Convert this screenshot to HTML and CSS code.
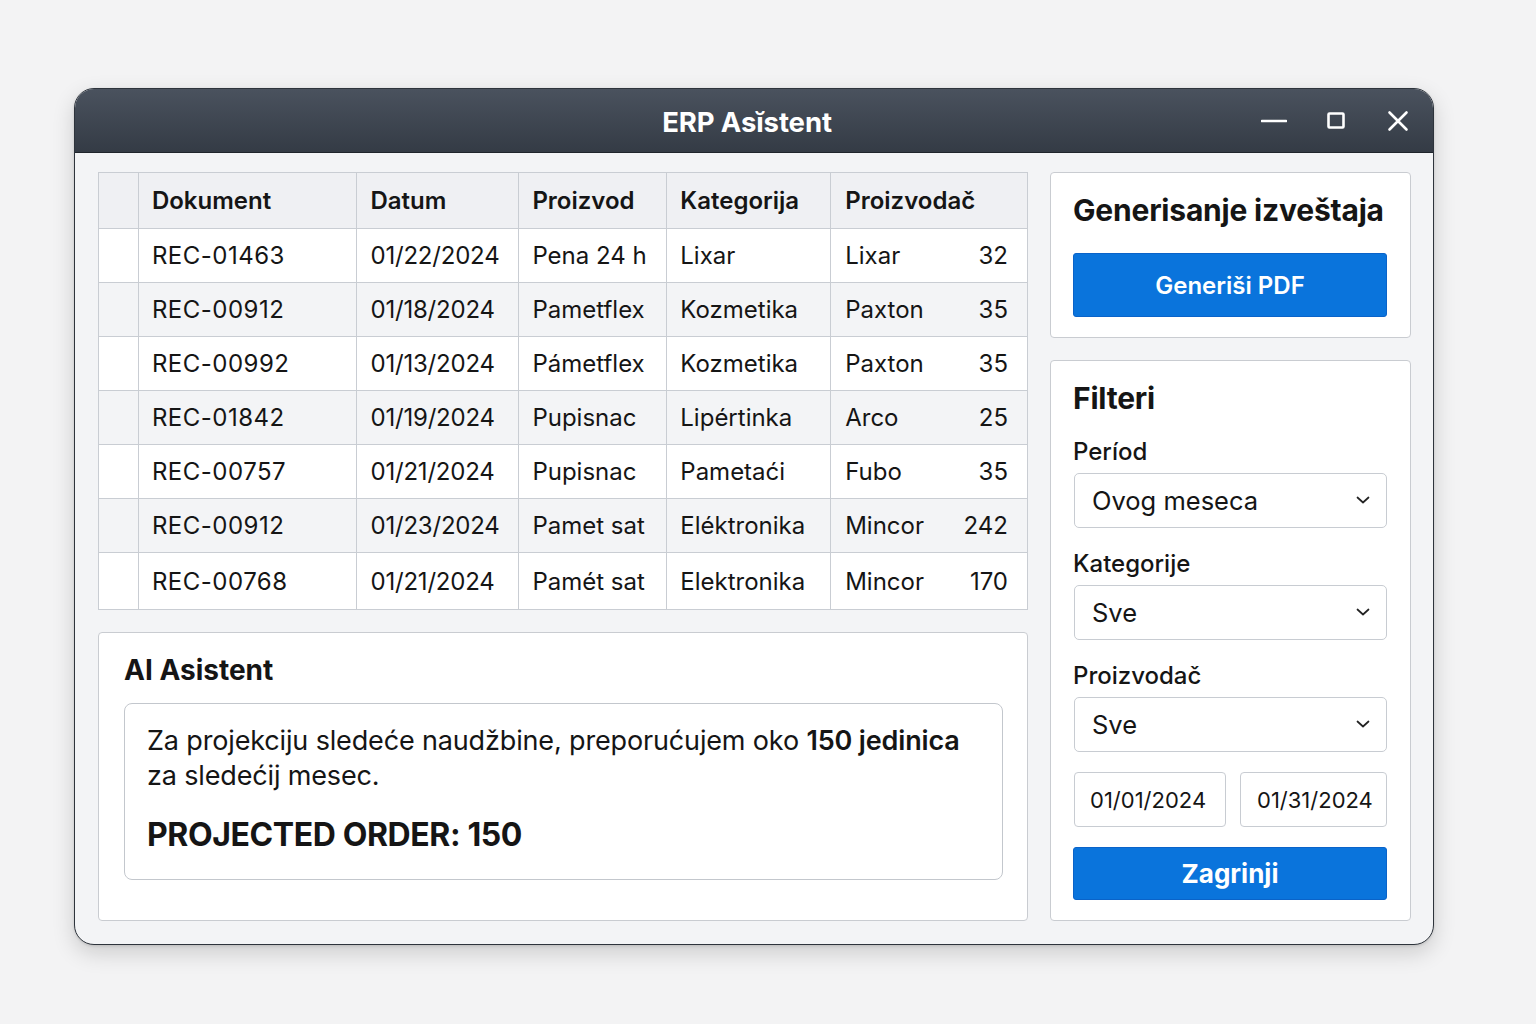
FILE: index.html
```html
<!DOCTYPE html>
<html lang="sr">
<head>
<meta charset="utf-8">
<title>ERP Asistent</title>
<link rel="stylesheet" href="styles.css">
</head>
<body>
<div class="page">
  <div class="window">
    <div class="titlebar">
      <div class="title">ERP Asĭstent</div>
      <div class="controls">
        <svg class="ctl" width="26" height="26" viewBox="0 0 26 26"><line x1="1" y1="13" x2="25" y2="13" stroke="#fff" stroke-width="2.6" stroke-linecap="round"/></svg>
        <svg class="ctl" width="26" height="26" viewBox="0 0 26 26"><rect x="5.5" y="5.5" width="15" height="14" rx="1" fill="none" stroke="#fff" stroke-width="2.6"/></svg>
        <svg class="ctl" width="26" height="26" viewBox="0 0 26 26"><path d="M4.5 4.5 L21.5 21.5 M21.5 4.5 L4.5 21.5" stroke="#fff" stroke-width="2.6" stroke-linecap="round"/></svg>
      </div>
    </div>
    <div class="body">
      <div class="main-col">
        <table class="grid">
          <colgroup>
            <col class="c0"><col class="c1"><col class="c2"><col class="c3"><col class="c4"><col class="c5">
          </colgroup>
          <thead>
            <tr><th></th><th>Dokument</th><th>Datum</th><th>Proizvod</th><th>Kategorija</th><th>Proizvodač</th></tr>
          </thead>
          <tbody>
            <tr><td></td><td>REC-01463</td><td>01/22/2024</td><td>Pena 24 h</td><td>Lixar</td><td><div class="split"><span>Lixar</span><span>32</span></div></td></tr>
            <tr><td></td><td>REC-00912</td><td>01/18/2024</td><td>Pametflex</td><td>Kozmetika</td><td><div class="split"><span>Paxton</span><span>35</span></div></td></tr>
            <tr><td></td><td>REC-00992</td><td>01/13/2024</td><td>Pámetflex</td><td>Kozmetika</td><td><div class="split"><span>Paxton</span><span>35</span></div></td></tr>
            <tr><td></td><td>REC-01842</td><td>01/19/2024</td><td>Pupisnac</td><td>Lipértinka</td><td><div class="split"><span>Arco</span><span>25</span></div></td></tr>
            <tr><td></td><td>REC-00757</td><td>01/21/2024</td><td>Pupisnac</td><td>Pametaći</td><td><div class="split"><span>Fubo</span><span>35</span></div></td></tr>
            <tr><td></td><td>REC-00912</td><td>01/23/2024</td><td>Pamet sat</td><td>Eléktronika</td><td><div class="split"><span>Mincor</span><span>242</span></div></td></tr>
            <tr><td></td><td>REC-00768</td><td>01/21/2024</td><td>Pamét sat</td><td>Elektronika</td><td><div class="split"><span>Mincor</span><span>170</span></div></td></tr>
          </tbody>
        </table>
        <section class="card ai-card">
          <h2 class="ai-title">AI Asistent</h2>
          <div class="ai-box">
            <p class="ai-text">Za projekciju sledeće naudžbine, preporućujem oko <strong>150 jedinica</strong> za sledećij mesec.</p>
            <p class="ai-order">PROJECTED ORDER: 150</p>
          </div>
        </section>
      </div>
      <div class="side-col">
        <section class="card report-card">
          <h2 class="card-title">Generisanje izveštaja</h2>
          <button class="btn btn-pdf">Generiši PDF</button>
        </section>
        <section class="card filter-card">
          <h2 class="card-title">Filteri</h2>
          <div class="label">Períod</div>
          <div class="select"><span>Ovog meseca</span><svg width="14" height="10" viewBox="0 0 14 10"><path d="M1.5 2.5 L7 7.5 L12.5 2.5" fill="none" stroke="#222" stroke-width="1.7" stroke-linecap="round" stroke-linejoin="round"/></svg></div>
          <div class="label">Kategorije</div>
          <div class="select"><span>Sve</span><svg width="14" height="10" viewBox="0 0 14 10"><path d="M1.5 2.5 L7 7.5 L12.5 2.5" fill="none" stroke="#222" stroke-width="1.7" stroke-linecap="round" stroke-linejoin="round"/></svg></div>
          <div class="label">Proizvodač</div>
          <div class="select"><span>Sve</span><svg width="14" height="10" viewBox="0 0 14 10"><path d="M1.5 2.5 L7 7.5 L12.5 2.5" fill="none" stroke="#222" stroke-width="1.7" stroke-linecap="round" stroke-linejoin="round"/></svg></div>
          <div class="dates">
            <div class="date date-from">01/01/2024</div>
            <div class="date date-to">01/31/2024</div>
          </div>
          <button class="btn btn-apply">Zagrinji</button>
        </section>
      </div>
    </div>
  </div>
</div>
</body>
</html>
```

FILE: styles.css
```css
* { box-sizing: border-box; }
html, body { margin: 0; padding: 0; }
body {
  background: #f3f3f4;
  font-family: Inter, "Noto Sans", "Liberation Sans", sans-serif;
  color: #151515;
  min-height: 1024px;
}
.page {
  padding: 88px 0 0 74px;
}
.window {
  width: 1360px;
  height: 857px;
  border: 1px solid #2e343c;
  border-radius: 20px;
  overflow: hidden;
  background: #f3f4f6;
  box-shadow: 0 8px 22px rgba(0, 0, 0, 0.16), 0 1px 3px rgba(0,0,0,0.12);
  display: flex;
  flex-direction: column;
}
.titlebar {
  height: 64px;
  flex: none;
  background: linear-gradient(#4a525e, #343b45);
  border-bottom: 1px solid #1f252c;
  display: flex;
  align-items: center;
  justify-content: center;
  position: relative;
}
.title {
  color: #fff;
  font-weight: 700;
  font-size: 27.5px;
  letter-spacing: -0.1px;
  margin-left: -14px;
  margin-top: 3px;
}
.controls {
  position: absolute;
  right: 22px;
  top: 19px;
  display: flex;
  gap: 36px;
}
.ctl { display: block; }
.body {
  flex: 1;
  min-height: 0;
  display: flex;
  gap: 22px;
  padding: 19px 22px 23px 23px;
}
.main-col {
  flex: 1;
  display: flex;
  flex-direction: column;
  gap: 22px;
}
.side-col {
  width: 361px;
  flex: none;
  display: flex;
  flex-direction: column;
  gap: 22px;
}
/* table */
.grid {
  width: 930px;
  border-collapse: collapse;
  background: #fff;
  font-size: 24px;
  border: 1px solid #c4c8ce;
}
.c0 { width: 40px; }
.c1 { width: 219px; }
.c2 { width: 162px; }
.c3 { width: 148px; }
.c4 { width: 164px; }
.c5 { width: 197px; }
.grid th, .grid td {
  border: 1px solid #c9cdd3;
  text-align: left;
  padding: 0 10px 0 13px;
  white-space: nowrap;
}
.grid th {
  height: 56px;
  background: #eff0f3;
  font-weight: 600;
}
.grid td {
  height: 54px;
  font-weight: 400;
}
.grid td:nth-child(2) { letter-spacing: 0.5px; }
.grid td:nth-child(3) { letter-spacing: -0.2px; }
.grid tbody tr:nth-child(even) td { background: #f3f4f6; }
.grid tbody tr:last-child td { height: 57px; }
.grid th:nth-child(6), .grid td:nth-child(6) { padding-left: 14px; padding-right: 19px; }
.split {
  display: flex;
  justify-content: space-between;
}
/* cards */
.card {
  background: #fff;
  border: 1px solid #c9ccd1;
  border-radius: 4px;
}
.ai-card {
  flex: 1;
  padding: 20px 24px 0 25px;
}
.ai-title {
  margin: 0;
  font-size: 28px;
  line-height: 34px;
  font-weight: 700;
}
.ai-box {
  margin-top: 16px;
  border: 1px solid #c3c7cd;
  border-radius: 8px;
  padding: 19px 24px 24px 22px;
}
.ai-text {
  margin: 0;
  font-size: 27px;
  line-height: 35px;
  letter-spacing: -0.15px;
}
.ai-text strong { font-weight: 600; }
.ai-order {
  margin: 22px 0 0;
  font-size: 32px;
  line-height: 40px;
  font-weight: 700;
  letter-spacing: -0.4px;
}
.report-card {
  padding: 19px 23px 20px 22px;
}
.card-title {
  margin: 0;
  font-size: 30px;
  line-height: 36px;
  font-weight: 700;
  letter-spacing: -0.2px;
}
.btn {
  display: block;
  width: 100%;
  border: 1px solid #0a63c9;
  border-radius: 3px;
  background: #0a74dc;
  color: #fff;
  font-family: inherit;
  cursor: pointer;
}
.btn-pdf {
  margin-top: 25px;
  height: 64px;
  font-size: 24px;
  font-weight: 600;
}
.filter-card {
  flex: 1;
  padding: 19px 23px 18px 22px;
}
.label {
  margin-top: 22px;
  font-size: 24px;
  line-height: 28px;
  font-weight: 500;
}
.select {
  margin-top: 7px;
  margin-left: 1px;
  height: 55px;
  border: 1px solid #c8ccd2;
  border-radius: 5px;
  display: flex;
  align-items: center;
  justify-content: space-between;
  padding: 0 16px 0 17px;
  font-size: 25.5px;
}
.select svg { display: block; margin-top: -2px; }
.dates {
  margin-top: 20px;
  margin-left: 1px;
  display: flex;
  gap: 14px;
}
.date {
  height: 55px;
  border: 1px solid #c8ccd2;
  border-radius: 4px;
  display: flex;
  align-items: center;
  font-size: 22px;
  padding-left: 15px;
}
.date-from { width: 152px; }
.date-to { flex: 1; padding-left: 16px; }
.btn-apply {
  margin-top: 20px;
  height: 53px;
  font-size: 26px;
  font-weight: 700;
}
```
